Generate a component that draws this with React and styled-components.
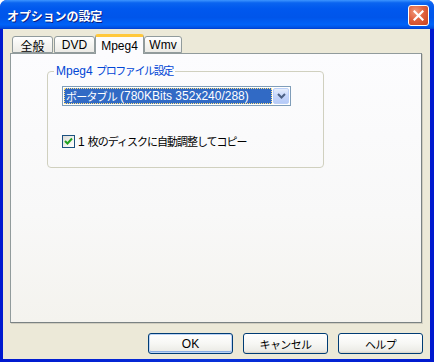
import React from "react";
import styled, { createGlobalStyle } from "styled-components";

const Global = createGlobalStyle`
  html, body { margin: 0; padding: 0; background: #ffffff; }
  body { width: 434px; height: 362px; overflow: hidden; font-family: "Liberation Sans", "Noto Sans CJK JP", sans-serif; }
  * { box-sizing: border-box; }
`;

const Window = styled.div`
  width: 434px;
  height: 362px;
  display: flex;
  flex-direction: column;
  background: #0831d9;
  border-radius: 7px 7px 0 0;
  overflow: hidden;
`;

const TitleBar = styled.div`
  height: 29px;
  flex: none;
  display: flex;
  align-items: center;
  justify-content: space-between;
  padding: 0 5px 0 7px;
  background: linear-gradient(to bottom, #3d95ff 0%, #0a64f0 10%, #0058ee 30%, #0055ea 60%, #0062f8 85%, #0053e5 94%, #003dd0 100%);
`;

const Title = styled.div`
  color: #ffffff;
  font-family: "Noto Sans CJK JP", sans-serif;
  font-weight: 700;
  font-size: 12px;
  letter-spacing: -0.1px;
  text-shadow: 1px 1px 0 #0a1e80;
  padding-top: 1px;
`;

const CloseButton = styled.div`
  width: 21px;
  height: 21px;
  border: 1px solid #ffffff;
  border-radius: 3px;
  background: radial-gradient(circle at 35% 30%, #f29a7c 0%, #e0623f 45%, #c8401c 100%);
  display: flex;
  align-items: center;
  justify-content: center;
  margin-top: 1px;
`;

const Frame = styled.div`
  flex: 1;
  display: flex;
  padding: 0 4px 3px 3px;
  background: linear-gradient(to right, #0019cf, #0831d9 50%, #0019cf);
`;

const Client = styled.div`
  flex: 1;
  background: #ece9d8;
  display: flex;
  flex-direction: column;
  padding: 5px 8px 0 7px;
`;

const TabStrip = styled.div`
  height: 19px;
  display: flex;
  align-items: flex-end;
  padding-left: 2px;
  gap: 1px;
  position: relative;
  z-index: 1;
`;

const Tab = styled.div`
  width: ${(p) => p.w}px;
  height: ${(p) => (p.active ? 20 : 17)}px;
  margin-bottom: ${(p) => (p.active ? -1 : 0)}px;
  margin-left: ${(p) => (p.active ? -1 : 0)}px;
  margin-right: ${(p) => (p.active ? -1 : 0)}px;
  border: 1px solid #919b9c;
  border-bottom: ${(p) => (p.active ? "none" : "1px solid #919b9c")};
  border-top: ${(p) => (p.active ? "3px solid #ffc83c" : "1px solid #919b9c")};
  border-radius: 3px 3px 0 0;
  background: ${(p) =>
    p.active ? "#fcfcfe" : "linear-gradient(to bottom, #ffffff 0%, #f7f7f4 40%, #ecebe6 100%)"};
  display: flex;
  align-items: center;
  justify-content: center;
  font-size: ${(p) => (p.cjk ? 12 : 12)}px;
  font-family: ${(p) => (p.cjk ? '"Noto Sans CJK JP", sans-serif' : '"Liberation Sans", sans-serif')};
  color: #000000;
  padding-top: ${(p) => (p.active ? 0 : 1)}px;
`;

const Panel = styled.div`
  height: 270px;
  border: 1px solid #919b9c;
  border-right-color: #7a8283;
  border-bottom-color: #7a8283;
  box-shadow: 1px 1px 0 #d0cdbf;
  background: linear-gradient(to bottom, #fcfcfe 0%, #f8f8f8 60%, #f4f3ee 100%);
  padding: 10px 0 0 36px;
`;

const Group = styled.fieldset`
  width: 277px;
  height: 104px;
  margin: 0;
  padding: 8px 0 0 14px;
  border: 1px solid #d0d0bf;
  border-radius: 4px;
  display: flex;
  flex-direction: column;
  min-width: 0;
`;

const Legend = styled.legend`
  margin-left: -8px;
  padding: 0 2px;
  font-size: 12px;
  line-height: 14px;
  color: #0046d5;
  font-family: "Liberation Sans", "Noto Sans CJK JP", sans-serif;
`;

const LegendJa = styled.span`
  font-size: 11px;
  letter-spacing: -1.4px;
`;

const Combo = styled.div`
  width: 229px;
  height: 20px;
  border: 1px solid #7f9db9;
  background: #ffffff;
  display: flex;
  align-items: stretch;
  padding: 1px;
`;

const ComboValue = styled.div`
  flex: 1;
  background: #316ac5;
  color: #ffffff;
  outline: 1px dotted #ffe080;
  outline-offset: -1px;
  font-size: 12px;
  font-family: "Liberation Sans", "Noto Sans CJK JP", sans-serif;
  display: flex;
  align-items: center;
  padding-left: 2px;
  white-space: nowrap;
  overflow: hidden;
  margin-right: 1px;
`;

const ComboJa = styled.span`
  font-size: 11px;
  letter-spacing: -0.8px;
  margin-right: 3px;
`;

const ComboButton = styled.div`
  width: 16px;
  border: 1px solid #bcd0f8;
  border-radius: 2px;
  background: linear-gradient(to bottom, #e6eefc 0%, #c6d6fb 50%, #b6cbf8 100%);
  display: flex;
  align-items: center;
  justify-content: center;
`;

const CheckRow = styled.div`
  display: flex;
  align-items: center;
  gap: 3px;
  margin-top: 27px;
`;

const CheckBox = styled.div`
  width: 13px;
  height: 13px;
  border: 1px solid #1c5180;
  background: linear-gradient(135deg, #dcdcd7 0%, #f4f4f0 60%, #ffffff 100%);
  display: flex;
  align-items: center;
  justify-content: center;
`;

const Label = styled.span`
  font-size: 12px;
  font-family: "Liberation Sans", "Noto Sans CJK JP", sans-serif;
  color: #000000;
`;

const LabelJa = styled.span`
  font-size: 11px;
  letter-spacing: -1px;
  margin-left: 3px;
`;

const ButtonRow = styled.div`
  display: flex;
  justify-content: flex-end;
  gap: 10px;
  margin-top: 10px;
  margin-right: -1px;
`;

const Button = styled.div`
  width: 85px;
  height: 21px;
  border: 1px solid #003c74;
  border-radius: 3px;
  background: linear-gradient(to bottom, #ffffff 0%, #f7f7f4 50%, #ecebe6 90%, #d6d0c5 100%);
  box-shadow: ${(p) => (p.def ? "inset 0 0 0 1px #bcd4f6, inset 0 -1px 0 1px #89ade4" : "none")};
  display: flex;
  align-items: center;
  justify-content: center;
  font-size: ${(p) => (p.cjk ? 11 : 12)}px;
  font-family: "Liberation Sans", "Noto Sans CJK JP", sans-serif;
  letter-spacing: ${(p) => (p.cjk ? -0.6 : 0)}px;
  color: #000000;
`;

export default function App() {
  return (
    <>
      <Global />
      <Window>
        <TitleBar>
          <Title>オプションの設定</Title>
          <CloseButton>
            <svg width="11" height="11" viewBox="0 0 11 11">
              <path d="M1.5 1.5 L9.5 9.5 M9.5 1.5 L1.5 9.5" stroke="#ffffff" strokeWidth="2.2" strokeLinecap="square" />
            </svg>
          </CloseButton>
        </TitleBar>
        <Frame>
          <Client>
            <TabStrip>
              <Tab w={41} cjk>全般</Tab>
              <Tab w={41}>DVD</Tab>
              <Tab w={49} active>Mpeg4</Tab>
              <Tab w={38}>Wmv</Tab>
            </TabStrip>
            <Panel>
              <Group>
                <Legend>
                  Mpeg4 <LegendJa>プロファイル設定</LegendJa>
                </Legend>
                <Combo>
                  <ComboValue>
                    <ComboJa>ポータブル</ComboJa>(780KBits 352x240/288)
                  </ComboValue>
                  <ComboButton>
                    <svg width="9" height="6" viewBox="0 0 9 6">
                      <path d="M1 1 L4.5 4.5 L8 1" stroke="#4d6185" strokeWidth="2" fill="none" />
                    </svg>
                  </ComboButton>
                </Combo>
                <CheckRow>
                  <CheckBox>
                    <svg width="9" height="9" viewBox="0 0 9 9">
                      <path d="M1 4 L3.5 6.5 L8 1.5" stroke="#21a121" strokeWidth="2" fill="none" />
                    </svg>
                  </CheckBox>
                  <Label>
                    1<LabelJa>枚のディスクに自動調整してコピー</LabelJa>
                  </Label>
                </CheckRow>
              </Group>
            </Panel>
            <ButtonRow>
              <Button def>OK</Button>
              <Button cjk>キャンセル</Button>
              <Button cjk>ヘルプ</Button>
            </ButtonRow>
          </Client>
        </Frame>
      </Window>
    </>
  );
}
